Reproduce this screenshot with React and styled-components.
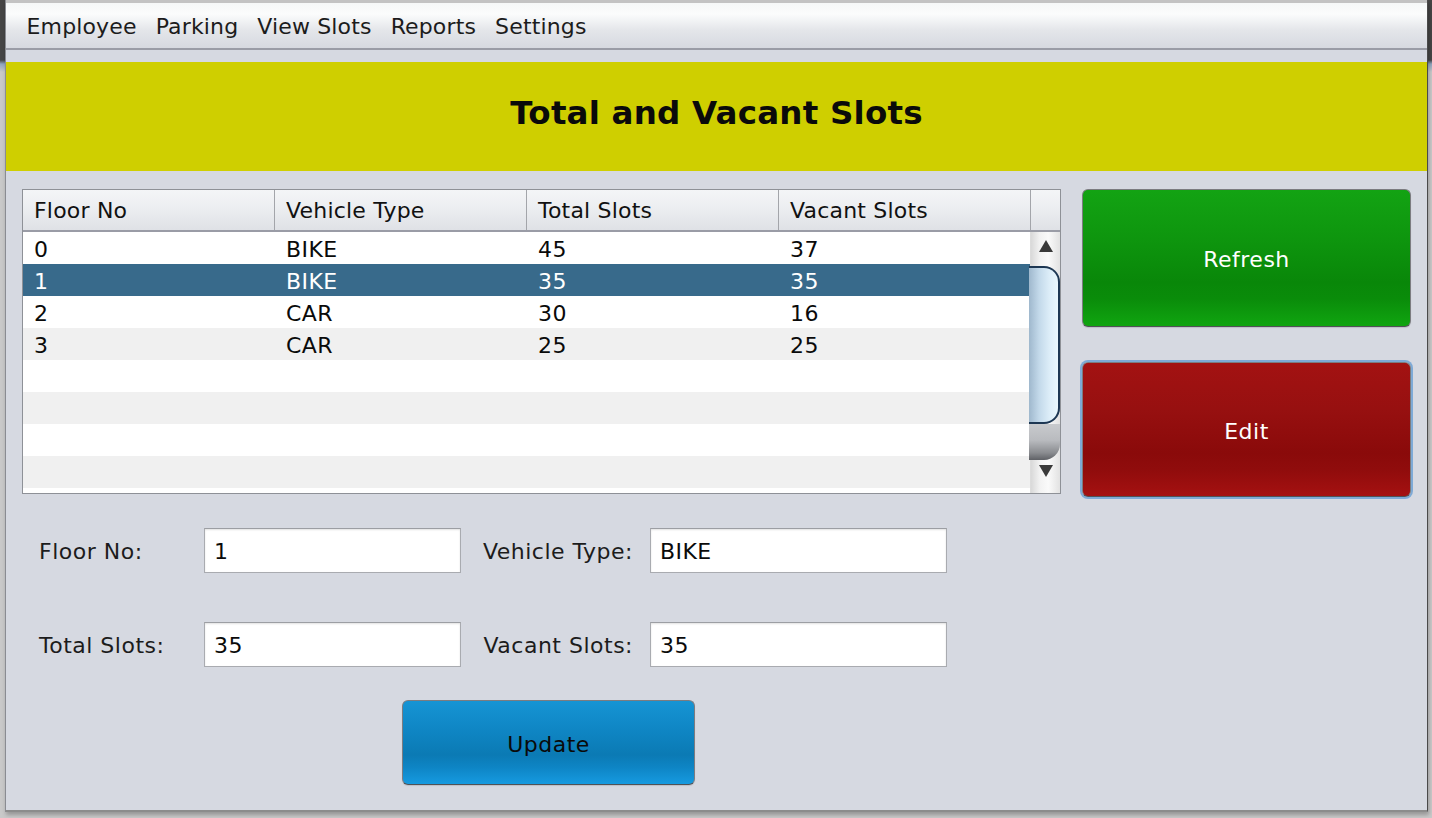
import React from "react";
import styled, { createGlobalStyle, css } from "styled-components";

const Global = createGlobalStyle`
  html, body { margin: 0; padding: 0; }
  body {
    width: 1432px;
    height: 818px;
    overflow: hidden;
    background: linear-gradient(to bottom, #454545 0px, #454545 60px, #8fa4bf 64px, #c9c9c9 72px, #c9c9c9 100%);
    font-family: "DejaVu Sans", "Liberation Sans", sans-serif;
  }
  * { box-sizing: border-box; }
`;

const Window = styled.div`
  margin-left: 5px;
  width: 1423px;
  height: 812px;
  background: #d6d9e1;
  border-left: 1px solid #8a8c92;
  border-right: 1px solid #4a4a4a;
  border-bottom: 2px solid #8c8c8c;
  box-shadow: 1px 3px 4px rgba(0, 0, 0, 0.25);
  display: flex;
  flex-direction: column;
`;

const MenuBar = styled.div`
  height: 50px;
  border-top: 3px solid #c3c3c3;
  border-bottom: 2px solid #9a9ca6;
  background: linear-gradient(to bottom, #f6f8f8 0%, #fbfcfc 25%, #e4e6ea 60%, #d6d9e0 100%);
  display: flex;
  align-items: center;
  padding-left: 11px;
`;

const MenuItem = styled.span`
  font-size: 22px;
  letter-spacing: 0.15px;
  color: #1c1c1c;
  padding: 2px 9.5px 0;
`;

const Content = styled.div`
  flex: 1;
  display: flex;
  flex-direction: column;
  padding-top: 12px;
`;

const Banner = styled.div`
  height: 109px;
  background: #cfcf00;
  display: flex;
  align-items: center;
  justify-content: center;
`;

const Title = styled.h1`
  margin: 0 0 8px 0;
  font-size: 32.5px;
  font-weight: bold;
  letter-spacing: 0.2px;
  color: #0a0a0a;
`;

const Main = styled.div`
  display: flex;
  padding: 18px 16px 0 16px;
  gap: 21px;
`;

const LeftCol = styled.div`
  width: 1039px;
  display: flex;
  flex-direction: column;
`;

const RightCol = styled.div`
  width: 329px;
  display: flex;
  flex-direction: column;
  gap: 33px;
`;

const TableBox = styled.div`
  border: 1px solid #8e9197;
  background: #ffffff;
  display: flex;
  flex-direction: column;
`;

const HeaderRow = styled.div`
  display: grid;
  grid-template-columns: 252px 252px 252px 252px 29px;
  height: 42px;
  border-bottom: 2px solid #9a9ca6;
  background: linear-gradient(to bottom, #f4f5f7 0%, #eceef1 45%, #dfe1e6 100%);
`;

const HeaderCell = styled.div`
  display: flex;
  align-items: center;
  padding-left: 11px;
  font-size: 22px;
  letter-spacing: 0.2px;
  color: #111;
  border-right: ${(p) => (p.$last ? "none" : "1px solid #a3a5aa")};
`;

const TableBody = styled.div`
  height: 261px;
  display: flex;
  overflow: hidden;
`;

const Rows = styled.div`
  width: 1007px;
  display: flex;
  flex-direction: column;
`;

const Row = styled.div`
  height: 32px;
  flex-shrink: 0;
  display: grid;
  grid-template-columns: 252px 252px 252px 251px;
  background: ${(p) => (p.$selected ? "#386a8b" : p.$odd ? "#f0f0f0" : "#ffffff")};
  color: ${(p) => (p.$selected ? "#ffffff" : "#0a0a0a")};
`;

const Cell = styled.div`
  display: flex;
  align-items: center;
  padding: 2px 0 0 11px;
  font-size: 22px;
  letter-spacing: 0.4px;
`;

const ScrollBar = styled.div`
  width: 30px;
  background: linear-gradient(to right, #d9d9d9 0%, #f2f2f2 30%, #fafafa 60%, #e2e2e2 100%);
  border-left: 1px solid #dcdcdc;
  display: flex;
  flex-direction: column;
`;

const ArrowBox = styled.div`
  height: ${(p) => p.$h}px;
  display: flex;
  justify-content: center;
  align-items: flex-start;
  padding-top: ${(p) => p.$pt}px;
  flex-shrink: 0;
`;

const Thumb = styled.div`
  height: 158px;
  margin-left: -2px;
  border: 2px solid #1d3753;
  border-left: none;
  border-radius: 0 16px 16px 0;
  background: linear-gradient(to right, #9fb8cd 0%, #c3d9ea 35%, #dcedf8 70%, #eaf7fd 100%);
  flex-shrink: 0;
`;

const ThumbShadow = styled.div`
  height: 36px;
  margin-left: -2px;
  border-radius: 0 0 16px 0;
  background: linear-gradient(to bottom, #c8cacd 0%, #b9bbbf 45%, #8a8c90 80%, #5f6166 100%);
  flex-shrink: 0;
`;

const Spacer = styled.div`
  flex: 1;
`;

const Form = styled.div`
  display: grid;
  grid-template-columns: 165px 257px 189px 297px;
  grid-auto-rows: 45px;
  row-gap: 49px;
  padding-left: 17px;
  margin-top: 34px;
`;

const Label = styled.label`
  align-self: center;
  font-size: 22px;
  letter-spacing: 0.5px;
  color: #1c1c1c;
  text-align: ${(p) => (p.$right ? "right" : "left")};
  padding-right: ${(p) => (p.$right ? "17px" : "0")};
  padding-top: 2px;
`;

const Input = styled.input`
  height: 45px;
  width: 100%;
  border: 1px solid #a9abb0;
  border-top-color: #9c9ea3;
  background: #ffffff;
  box-shadow: inset 0 1px 2px rgba(0, 0, 0, 0.12);
  padding: 2px 9px 0;
  font-family: "DejaVu Sans", "Liberation Sans", sans-serif;
  font-size: 22px;
  letter-spacing: 0.4px;
  color: #0a0a0a;
  outline: none;
`;

const UpdateRow = styled.div`
  margin-top: 33px;
  padding-left: 380px;
`;

const gradients = {
  green: css`
    background: linear-gradient(to bottom, #13a313 0%, #0e960e 35%, #098709 68%, #0a8c0a 80%, #10a510 100%);
    color: #ffffff;
  `,
  red: css`
    background: linear-gradient(to bottom, #a31212 0%, #971010 35%, #8a0a0a 68%, #900c0c 80%, #a51111 100%);
    color: #ffffff;
  `,
  blue: css`
    background: linear-gradient(to bottom, #1694d4 0%, #0f86c4 35%, #0b7ab4 65%, #0e85c5 80%, #169ae0 100%);
    color: #0a0a0a;
  `,
};

const Button = styled.button`
  ${(p) => gradients[p.$variant]}
  width: ${(p) => p.$w}px;
  height: ${(p) => p.$h}px;
  border: 1px solid #7c7c80;
  border-bottom-color: #505256;
  border-radius: 6px;
  font-family: "DejaVu Sans", "Liberation Sans", sans-serif;
  font-size: 22px;
  letter-spacing: 0.5px;
  display: flex;
  align-items: center;
  justify-content: center;
  padding: 3px 0 0 0;
  box-shadow: ${(p) => (p.$focused ? "0 0 0 2px #7eaad6" : "0 1px 1px rgba(0,0,0,0.12)")};
  margin-top: ${(p) => (p.$focused ? "2px" : "0")};
  cursor: pointer;
`;

const Triangle = ({ down }) => (
  <svg width="16" height="14" viewBox="0 0 16 14">
    <polygon points={down ? "1,1 15,1 8,13" : "8,1 15,13 1,13"} fill="#3a3a3a" />
  </svg>
);

const menu = ["Employee", "Parking", "View Slots", "Reports", "Settings"];
const headers = ["Floor No", "Vehicle Type", "Total Slots", "Vacant Slots"];
const data = [
  ["0", "BIKE", "45", "37"],
  ["1", "BIKE", "35", "35"],
  ["2", "CAR", "30", "16"],
  ["3", "CAR", "25", "25"],
];

export default function App() {
  const rows = [];
  for (let i = 0; i < 9; i++) rows.push(data[i] || null);
  return (
    <>
      <Global />
      <Window>
        <MenuBar>
          {menu.map((m) => (
            <MenuItem key={m}>{m}</MenuItem>
          ))}
        </MenuBar>
        <Content>
          <Banner>
            <Title>Total and Vacant Slots</Title>
          </Banner>
          <Main>
            <LeftCol>
              <TableBox>
                <HeaderRow>
                  {headers.map((h) => (
                    <HeaderCell key={h}>{h}</HeaderCell>
                  ))}
                  <HeaderCell $last />
                </HeaderRow>
                <TableBody>
                  <Rows>
                    {rows.map((r, i) => (
                      <Row key={i} $odd={i % 2 === 1} $selected={i === 1}>
                        {(r || ["", "", "", ""]).map((c, j) => (
                          <Cell key={j}>{c}</Cell>
                        ))}
                      </Row>
                    ))}
                  </Rows>
                  <ScrollBar>
                    <ArrowBox $h={34} $pt={7}>
                      <Triangle />
                    </ArrowBox>
                    <Thumb />
                    <ThumbShadow />
                    <Spacer />
                    <ArrowBox $h={33} $pt={4}>
                      <Triangle down />
                    </ArrowBox>
                  </ScrollBar>
                </TableBody>
              </TableBox>
              <Form>
                <Label>Floor No:</Label>
                <Input defaultValue="1" />
                <Label $right>Vehicle Type:</Label>
                <Input defaultValue="BIKE" />
                <Label>Total Slots:</Label>
                <Input defaultValue="35" />
                <Label $right>Vacant Slots:</Label>
                <Input defaultValue="35" />
              </Form>
              <UpdateRow>
                <Button $variant="blue" $w={293} $h={85}>
                  Update
                </Button>
              </UpdateRow>
            </LeftCol>
            <RightCol>
              <Button $variant="green" $w={329} $h={138}>
                Refresh
              </Button>
              <Button $variant="red" $w={329} $h={135} $focused>
                Edit
              </Button>
            </RightCol>
          </Main>
        </Content>
      </Window>
    </>
  );
}
